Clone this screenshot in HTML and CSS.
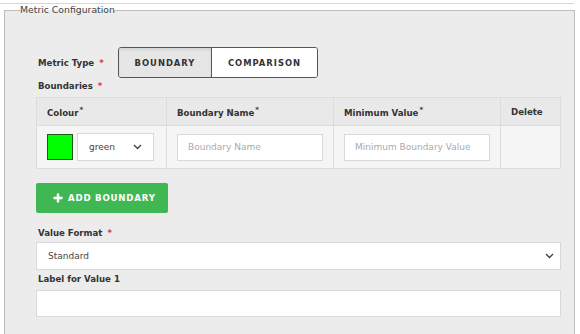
FILE: index.html
```html
<!DOCTYPE html>
<html lang="en">
<head>
    <meta charset="UTF-8">
    <meta name="viewport" content="width=device-width, initial-scale=1.0">
    <title>Metric Configuration</title>
    <link rel="stylesheet" href="styles.css">
</head>
<body>
    <div class="top-strip"></div>

    <fieldset class="metric-config">
        <legend>Metric Configuration</legend>

        <div class="config-body">
            <div class="type-row">
                <label class="field-label">Metric Type <span class="req">*</span></label>
                <div class="toggle">
                    <button class="toggle-btn active">BOUNDARY</button>
                    <button class="toggle-btn">COMPARISON</button>
                </div>
            </div>

            <label class="field-label">Boundaries <span class="req">*</span></label>
            <table class="boundaries">
                <thead>
                    <tr>
                        <th class="col-colour">Colour<sup>*</sup></th>
                        <th class="col-name">Boundary Name<sup>*</sup></th>
                        <th class="col-min">Minimum Value<sup>*</sup></th>
                        <th class="col-delete">Delete</th>
                    </tr>
                </thead>
                <tbody>
                    <tr>
                        <td>
                            <div class="colour-cell">
                                <span class="swatch"></span>
                                <div class="select small">
                                    <span>green</span>
                                    <svg class="chevron" width="9" height="6" viewBox="0 0 9 6"><path d="M1 1l3.5 3.5L8 1" fill="none" stroke="#444" stroke-width="1.4"/></svg>
                                </div>
                            </div>
                        </td>
                        <td><input class="text-input" type="text" placeholder="Boundary Name"></td>
                        <td><input class="text-input" type="text" placeholder="Minimum Boundary Value"></td>
                        <td></td>
                    </tr>
                </tbody>
            </table>

            <button class="add-btn">
                <svg width="10" height="10" viewBox="0 0 10 10"><path d="M5 0.5v9M0.5 5h9" stroke="#fff" stroke-width="2.4"/></svg>
                ADD BOUNDARY
            </button>

            <label class="field-label">Value Format <span class="req">*</span></label>
            <div class="select wide">
                <span>Standard</span>
                <svg class="chevron" width="9" height="6" viewBox="0 0 9 6"><path d="M1 1l3.5 3.5L8 1" fill="none" stroke="#444" stroke-width="1.4"/></svg>
            </div>

            <label class="field-label">Label for Value 1</label>
            <input class="text-input wide-input" type="text">
        </div>
    </fieldset>
</body>
</html>
```

FILE: styles.css
```css
body {
    margin: 0;
    font-family: 'DejaVu Sans', 'Open Sans', sans-serif;
    font-size: 9px;
    color: #333;
    background-color: #fff;
}
.top-strip {
    height: 3px;
    margin-right: 6px;
    border-bottom: 1px solid #d6d6d6;
}
.metric-config {
    margin: 0 5px 0 4px;
    padding: 0 0 40px 15px;
    border: 1px solid #bdbdbd;
    background-color: #ececec;
}
.metric-config legend {
    padding: 0;
    font-size: 9.3px;
    line-height: 12px;
    color: #444;
}
.config-body {
    padding: 31px 13px 0 16px;
}
.field-label {
    display: block;
    padding-left: 2px;
    font-weight: bold;
    font-size: 8.6px;
    line-height: 10px;
    color: #333;
}
.req {
    color: #e53935;
    margin-left: 2px;
}
.type-row {
    display: flex;
    align-items: center;
    margin-bottom: 3px;
}
.type-row .field-label {
    width: 80px;
}
.toggle {
    display: flex;
    border: 1px solid #555;
    border-radius: 3px;
    overflow: hidden;
}
.toggle-btn {
    height: 29px;
    border: none;
    background-color: #fff;
    font-family: inherit;
    font-weight: bold;
    font-size: 8.4px;
    letter-spacing: 1px;
    color: #333;
    padding: 0;
    width: 105px;
}
.toggle-btn.active {
    width: 93px;
    background-color: #e6e6e6;
    border-right: 1px solid #555;
    box-shadow: inset 0 2px 3px rgba(0, 0, 0, 0.08);
}
.boundaries {
    width: 100%;
    margin-top: 6px;
    border-collapse: collapse;
}
.boundaries th,
.boundaries td {
    border: 1px solid #dcdcdc;
    text-align: left;
    padding: 0 10px;
}
.boundaries th {
    height: 27px;
    background-color: #e9e9e9;
    font-size: 8.6px;
    color: #333;
}
.boundaries th sup {
    font-size: 7px;
    margin-left: 1px;
}
.boundaries td {
    height: 42px;
    background-color: #f5f5f5;
}
.col-colour { width: 109px; }
.col-name { width: 146px; }
.col-min { width: 146px; }
.colour-cell {
    display: flex;
    align-items: center;
    gap: 4px;
}
.swatch {
    width: 24px;
    height: 24px;
    background-color: #00ff00;
    border: 1px solid #1a5c1a;
}
.select {
    display: flex;
    align-items: center;
    justify-content: space-between;
    box-sizing: border-box;
    background-color: #fff;
    border: 1px solid #d9d9d9;
    color: #444;
    font-size: 9px;
}
.select.small {
    width: 77px;
    height: 28px;
    padding: 0 11px 0 11px;
}
.select.wide {
    height: 28px;
    margin: 4px 0 4px;
    padding: 0 6px 0 11px;
}
.text-input {
    display: block;
    box-sizing: border-box;
    width: 100%;
    height: 27px;
    padding: 0 10px;
    border: 1px solid #d9d9d9;
    background-color: #fff;
    font-family: inherit;
    font-size: 9px;
    color: #444;
}
.text-input::placeholder {
    color: #aaa;
}
.wide-input {
    margin-top: 6px;
}
.add-btn {
    display: flex;
    align-items: center;
    gap: 5px;
    margin: 14px 0 15px;
    height: 30px;
    width: 132px;
    padding: 0 0 0 17px;
    border: none;
    border-radius: 2px;
    background-color: #3fb853;
    color: #fff;
    font-family: inherit;
    font-weight: bold;
    font-size: 8.6px;
    letter-spacing: 0.8px;
}
```
